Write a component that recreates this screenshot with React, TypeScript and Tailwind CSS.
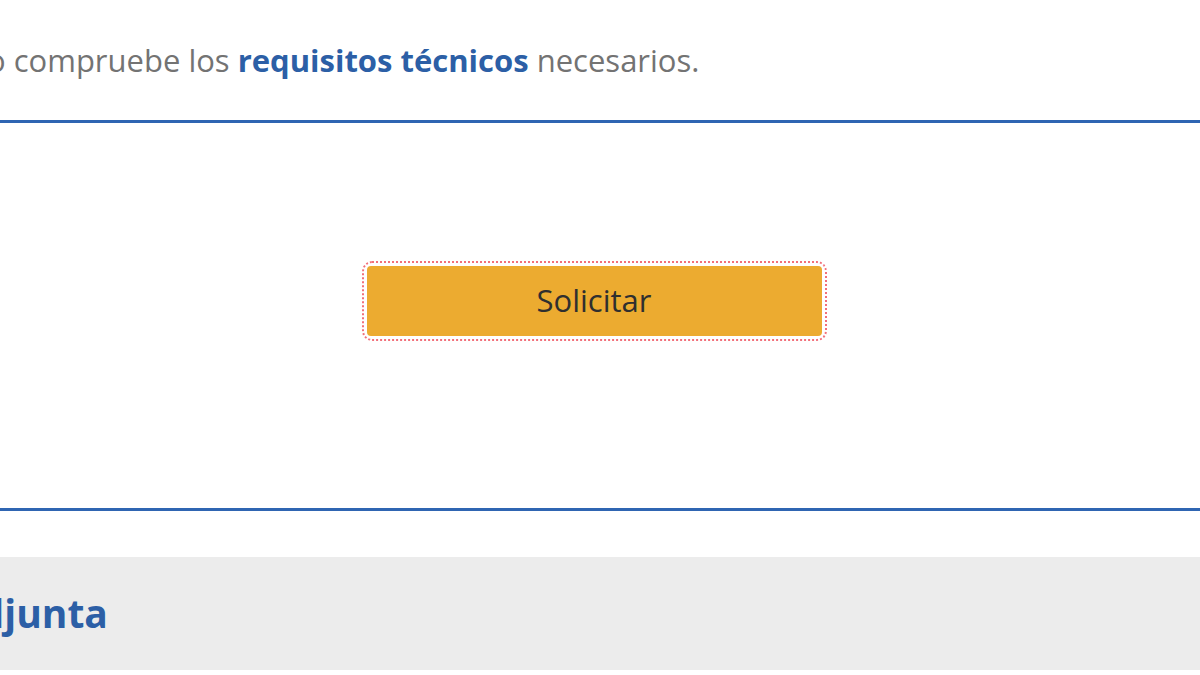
export default function App() {
  return (
    <div
      className="w-[1200px] h-[675px] overflow-hidden bg-white"
      style={{ fontFamily: '"Open Sans", "Noto Sans", sans-serif' }}
    >
      <div className="pt-[40px] pb-[40px] whitespace-nowrap">
        <p className="ml-[-13px] text-[31px] leading-[40px] text-[#737373]">
          o compruebe los{" "}
          <a className="font-bold text-[#2c5fa6]">requisitos técnicos</a>{" "}
          necesarios.
        </p>
      </div>

      <section className="border-y-[3px] border-[#2f65b2] h-[391px] flex items-center justify-center">
        <div className="mt-[-30px] ml-[-12px] p-[3px] rounded-[8px] outline-2 outline-dotted outline-[#f2707a]">
          <button className="w-[455px] h-[70px] rounded-[4px] bg-[#ecab30] text-[31px] text-[#2f2f2f]">
            Solicitar
          </button>
        </div>
      </section>

      <div className="mt-[46px] h-[113px] bg-[#ececec] flex items-center whitespace-nowrap">
        <h2 className="ml-[-44px] text-[39px] font-bold text-[#2c5fa6]">adjunta</h2>
      </div>
    </div>
  );
}
